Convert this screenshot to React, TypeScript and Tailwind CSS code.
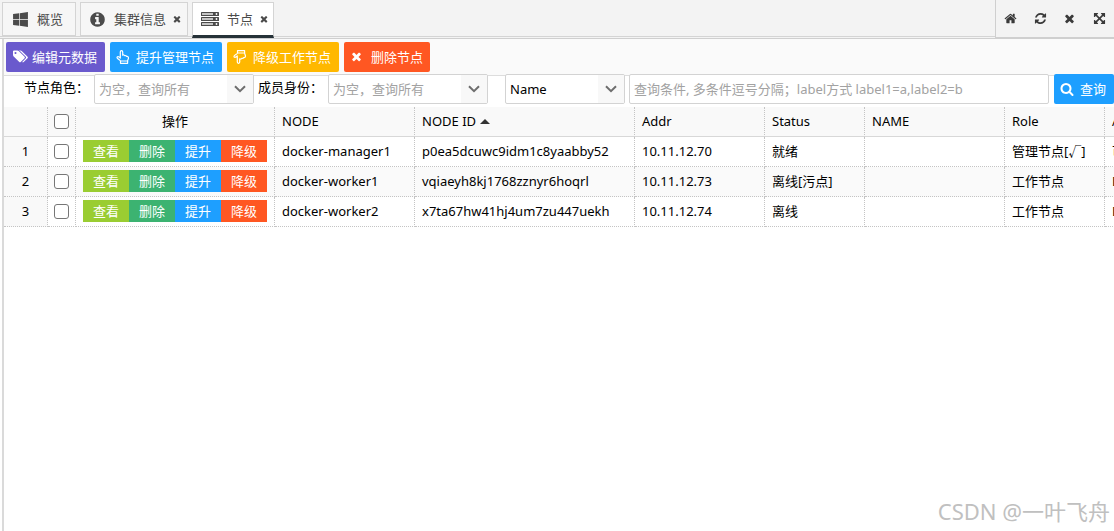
import { useState } from 'react';
import { FaWindows } from 'react-icons/fa';

const PATHS = {
  home: 'M1472 992v480q0 26-19 45t-45 19h-384v-384h-256v384h-384q-26 0-45-19t-19-45v-480q0-1 .5-3t.5-3l575-474 575 474q1 2 1 6zm223-69l-62 74q-8 9-21 11h-3q-13 0-21-7l-692-577-692 577q-12 8-24 7-13-2-21-11l-62-74q-8-10-7-23.5t11-21.5l719-599q32-26 76-26t76 26l244 204v-195q0-14 9-23t23-9h192q14 0 23 9t9 23v408l219 182q10 8 11 21.5t-7 23.5z',
  times: 'M1490 1322q0 40-28 68l-136 136q-28 28-68 28t-68-28l-294-294-294 294q-28 28-68 28t-68-28l-136-136q-28-28-28-68t28-68l294-294-294-294q-28-28-28-68t28-68l136-136q28-28 68-28t68 28l294 294 294-294q28-28 68-28t68 28l136 136q28 28 28 68t-28 68l-294 294 294 294q28 28 28 68z',
  refresh: 'M1639 1056q0 5-1 7-64 268-268 434.5t-478 166.5q-146 0-282.5-55t-243.5-157l-129 129q-19 19-45 19t-45-19-19-45v-448q0-26 19-45t45-19h448q26 0 45 19t19 45-19 45l-137 137q71 66 161 102t187 36q134 0 250-65t186-179q11-17 53-117 8-23 30-23h192q13 0 22.5 9.5t9.5 22.5zm25-800v448q0 26-19 45t-45 19h-448q-26 0-45-19t-19-45 19-45l138-138q-148-137-349-137-134 0-250 65t-186 179q-11 17-53 117-8 23-30 23h-199q-13 0-22.5-9.5t-9.5-22.5v-7q65-268 270-434.5t480-166.5q146 0 284 55.5t245 156.5l130-129q19-19 45-19t45 19 19 45z',
  expand: 'M1411 541l-355 355 355 355 144-144q29-31 70-14 39 17 39 59v448q0 26-19 45t-45 19h-448q-42 0-59-40-17-39 14-69l144-144-355-355-355 355 144 144q31 30 14 69-17 40-59 40h-448q-26 0-45-19t-19-45v-448q0-42 40-59 39-17 69 14l144 144 355-355-355-355-144 144q-19 19-45 19-12 0-24-5-40-17-40-59v-448q0-26 19-45t45-19h448q42 0 59 40 17 39-14 69l-144 144 355 355 355-355-144-144q-31-30-14-69 17-40 59-40h448q26 0 45 19t19 45v448q0 42-39 59-13 5-25 5-26 0-45-19z',
  search: 'M1216 832q0-185-131.5-316.5t-316.5-131.5-316.5 131.5-131.5 316.5 131.5 316.5 316.5 131.5 316.5-131.5 131.5-316.5zm512 832q0 52-38 90t-90 38q-54 0-90-38l-343-342q-179 124-399 124-143 0-273.5-55.5t-225-150-150-225-55.5-273.5 55.5-273.5 150-225 225-150 273.5-55.5 273.5 55.5 225 150 150 225 55.5 273.5q0 220-124 399l343 343q37 37 37 90z',
  info: 'M1152 1376v-160q0-14-9-23t-23-9h-96v-512q0-14-9-23t-23-9h-320q-14 0-23 9t-9 23v160q0 14 9 23t23 9h96v320h-96q-14 0-23 9t-9 23v160q0 14 9 23t23 9h448q14 0 23-9t9-23zm-128-896v-160q0-14-9-23t-23-9h-192q-14 0-23 9t-9 23v160q0 14 9 23t23 9h192q14 0 23-9t9-23zm640 416q0 209-103 385.5t-279.5 279.5-385.5 103-385.5-103-279.5-279.5-103-385.5 103-385.5 279.5-279.5 385.5-103 385.5 103 279.5 279.5 103 385.5z',
  tags: 'M576 448q0-53-37.5-90.5t-90.5-37.5-90.5 37.5-37.5 90.5 37.5 90.5 90.5 37.5 90.5-37.5 37.5-90.5zm1067 576q0 53-37 90l-491 492q-39 37-91 37-53 0-90-37l-715-716q-38-37-64.5-101t-26.5-117v-416q0-52 38-90t90-38h416q53 0 117 26.5t102 64.5l715 714q37 39 37 91zm384 0q0 53-37 90l-491 492q-39 37-91 37-36 0-59-14t-53-45l470-470q37-37 37-90 0-52-37-91l-715-714q-38-38-102-64.5t-117-26.5h224q53 0 117 26.5t102 64.5l715 714q37 39 37 91z',
};

function Icon({ name, className }: { name: keyof typeof PATHS; className: string }) {
  return (
    <svg viewBox={name === 'tags' ? '0 0 2048 1792' : '0 0 1792 1792'} fill="currentColor" className={className} aria-hidden="true">
      <path d={PATHS[name]} />
    </svg>
  );
}

function HandIcon({ down }: { down?: boolean }) {
  return (
    <svg viewBox="0 0 14 14" className="size-[14px]" fill="none" stroke="currentColor" strokeWidth="1.2" strokeLinejoin="round" aria-hidden="true">
      <g transform={down ? 'matrix(1 0 0 -1 0 14)' : undefined}>
        <path d="M4.3 8V1.9a1.2 1.2 0 0 1 2.4 0v3.3c.8-.5 1.8-.2 2.1.5.8-.3 1.7 0 1.9.8 1-.2 1.8.4 1.8 1.4 0 1.2-.9 2-.9 3.1H4.5C4.3 9.8 1 8.900 1 7.500c0-1.100 1.700-1.300 3.300.5z" />
        <path d="M4.500 11v2.300h7.100V11" />
      </g>
    </svg>
  );
}

function ServerIcon() {
  return (
    <svg viewBox="0 0 18 14" className="h-[14px] w-[18px]" aria-hidden="true">
      {[0, 5, 10].map((y) => (
        <g key={y}>
          <rect x="0" y={y} width="18" height="4" rx="0.6" fill="#4b4b4b" />
          <rect x="1" y={y + 1} width="11" height="2" fill="#c4c4c4" />
          <circle cx="15.5" cy={y + 2} r="0.9" fill="#fff" />
        </g>
      ))}
    </svg>
  );
}

function Chevron() {
  return (
    <span className="pointer-events-none absolute inset-y-0 right-0 flex w-[26px] items-center justify-center bg-[#f8f8f8]">
      <svg viewBox="0 0 12 8" className="h-2 w-3" fill="none" stroke="#6e6e6e" strokeWidth="2" aria-hidden="true">
        <path d="M1 1.2l5 5 5-5" />
      </svg>
    </span>
  );
}

function Combo({ id, width, options, muted }: { id: string; width: string; options: string[]; muted?: boolean }) {
  return (
    <div className={`relative h-[30px] shrink-0 overflow-hidden rounded-xs border border-[#d3d3d3] bg-white ${width}`}>
      <select id={id} aria-label={id} className={`block h-full w-full appearance-none bg-transparent px-1 outline-none ${muted ? 'text-[#a2a2a2]' : 'text-black'}`}>
        {options.map((o) => (
          <option key={o}>{o}</option>
        ))}
      </select>
      <Chevron />
    </div>
  );
}

const columns = [
  { title: 'NODE', width: 'w-[140px]' },
  { title: 'NODE ID', width: 'w-[220px]', sorted: true },
  { title: 'Addr', width: 'w-[130px]' },
  { title: 'Status', width: 'w-[100px]' },
  { title: 'NAME', width: 'w-[140px]' },
  { title: 'Role', width: 'w-[100px]' },
  { title: 'Availability', width: 'w-[100px]' },
];

const nodes = [
  ['docker-manager1', 'p0ea5dcuwc9idm1c8yaabby52', '10.11.12.70', '就绪', '', '管理节点[√]', '可用'],
  ['docker-worker1', 'vqiaeyh8kj1768zznyr6hoqrl', '10.11.12.73', '离线[污点]', '', '工作节点', 'Drain'],
  ['docker-worker2', 'x7ta67hw41hj4um7zu447uekh', '10.11.12.74', '离线', '', '工作节点', 'Drain'],
];

const actions = [
  { label: '查看', color: 'bg-[#9acd32]' },
  { label: '删除', color: 'bg-[#3cb371]' },
  { label: '提升', color: 'bg-[#1e9fff]' },
  { label: '降级', color: 'bg-[#ff5722]' },
];

const cell = 'border-r border-dotted border-r-[#c4c4c4]';
const toolButton = 'flex h-[30px] items-center rounded-xs text-white';

function App() {
  const [query, setQuery] = useState('');
  const [checked, setChecked] = useState<number[]>([]);

  const toggle = (i: number) => {
    setChecked(checked.includes(i) ? checked.filter((c) => c !== i) : [...checked, i]);
  };

  return (
    <div className="relative flex min-h-screen flex-col overflow-hidden bg-white text-[13px] leading-5 text-black [font-family:'Noto_Sans','Noto_Sans_CJK_SC',sans-serif]">
      <header className="flex h-[39px] shrink-0 justify-between border-b border-[#cfcfcf] bg-[#f3f3f3]">
        <nav className="flex h-[37px] grow gap-1 border-b border-[#d4d4d4] pt-0.5 pl-0.5 text-[#4b4b4b]">
          <button className="flex w-[74px] items-center gap-2 border border-[#d4d4d4] bg-[#f6f6f6] pl-[9px]">
            <FaWindows className="size-[17px]" />
            概览
          </button>
          <div className="flex w-[108px] items-center border border-[#d4d4d4] bg-[#f6f6f6] pl-2">
            <button className="flex items-center gap-2">
              <Icon name="info" className="size-[17px]" />
              集群信息
            </button>
            <button aria-label="关闭集群信息" className="ml-1.5">
              <Icon name="times" className="size-[10px]" />
            </button>
          </div>
          <div className="flex h-9 w-[82px] items-center border border-b-[3px] border-[#d4d4d4] border-b-[#263238] bg-white pl-2">
            <button className="flex items-center gap-2">
              <ServerIcon />
              节点
            </button>
            <button aria-label="关闭节点" className="ml-1.5">
              <Icon name="times" className="size-[10px]" />
            </button>
          </div>
        </nav>
        <div className="flex w-[119px] shrink-0 items-center justify-between border-b border-l border-[#cfcfcf] pr-2 pl-2 text-[#3a3a3a]">
          <button aria-label="首页"><Icon name="home" className="size-[13px]" /></button>
          <button aria-label="刷新"><Icon name="refresh" className="size-[13px]" /></button>
          <button aria-label="关闭"><Icon name="times" className="size-[13px]" /></button>
          <button aria-label="全屏"><Icon name="expand" className="size-[13px]" /></button>
        </div>
      </header>

      <main className="ml-0.5 grow border-l-2 border-[#dadada]">
        <div className="flex h-[35px] items-center gap-[5px] bg-[#fafafa] pl-0.5">
          <button className={`${toolButton} w-[99px] gap-1 bg-[#6a5acd] pl-1.5`}>
            <Icon name="tags" className="h-[15px] w-4" />
            编辑元数据
          </button>
          <button className={`${toolButton} w-[112px] gap-1.5 bg-[#1e9fff] pl-1.5`}>
            <HandIcon />
            提升管理节点
          </button>
          <button className={`${toolButton} w-[112px] gap-1.5 bg-[#ffb800] pl-1.5`}>
            <HandIcon down />
            降级工作节点
          </button>
          <button className={`${toolButton} w-[86px] gap-2 bg-[#ff5722] pl-1.5`}>
            <Icon name="times" className="size-[13px]" />
            删除节点
          </button>
        </div>

        <div className="flex h-[33px] bg-[linear-gradient(#fafafa_1px,#dddddd_1px,#dddddd_2px,#ffffff_2px)]">
          <label htmlFor="节点角色" className="w-[90px] pt-[3px] pl-5">节点角色：</label>
          <Combo id="节点角色" width="w-40" options={['为空，查询所有', '管理节点', '工作节点']} muted />
          <label htmlFor="成员身份" className="w-[74px] pt-[3px] pl-1">成员身份：</label>
          <Combo id="成员身份" width="w-40" options={['为空，查询所有', '就绪', '离线']} muted />
          <div className="ml-[17px] flex grow">
            <Combo id="查询字段" width="w-[120px]" options={['Name', 'ID', 'Label']} />
            <input
              type="text"
              aria-label="查询条件"
              placeholder="查询条件, 多条件逗号分隔；label方式 label1=a,label2=b"
              className="mr-[5px] ml-1 h-[30px] min-w-0 grow rounded-xs border border-[#d3d3d3] bg-white px-1 outline-none placeholder:text-[#a2a2a2]"
              value={query}
              onChange={(e) => setQuery(e.target.value)}
            />
            <button className={`${toolButton} w-[60px] shrink-0 gap-1.5 bg-[#1e9fff] pl-1.5`}>
              <Icon name="search" className="size-[14px]" />
              查询
            </button>
          </div>
        </div>

        <div className="overflow-hidden">
          <table className="w-[1201px] table-fixed border-separate border-spacing-0">
            <thead>
              <tr className="h-[30px] bg-[#f9f9f9] text-left *:border-b *:border-b-[#d8d8d8] *:font-normal *:[border-bottom-style:solid]">
                <th className={`${cell} w-11`}></th>
                <th className={`${cell} w-7`}>
                  <input
                    type="checkbox"
                    aria-label="全选"
                    className="mx-auto block size-[15px] appearance-none rounded-[3px] border border-[#767676] bg-white checked:bg-[#1e9fff]"
                    checked={checked.length === nodes.length}
                    onChange={(e) => setChecked(e.target.checked ? nodes.map((_, i) => i) : [])}
                  />
                </th>
                <th className={`${cell} w-[199px] pb-0.5 text-center`}>操作</th>
                {columns.map((c) => (
                  <th key={c.title} className={`${cell} ${c.width} pb-0.5 pl-[7px]`}>
                    {c.title}
                    {c.sorted && <span className="mb-0.5 ml-1 inline-block border-x-[5px] border-b-[5px] border-x-transparent border-b-[#333] align-middle"></span>}
                  </th>
                ))}
              </tr>
            </thead>
            <tbody>
              {nodes.map((node, i) => (
                <tr key={node[0]} className="h-[30px] even:bg-[#fafafa] *:border-b *:border-dotted *:border-b-[#c4c4c4]">
                  <td className={`${cell} bg-[#f9f9f9] pb-0.5 text-center`}>{i + 1}</td>
                  <td className={cell}>
                    <input
                      type="checkbox"
                      aria-label={node[0]}
                      className="mx-auto block size-[15px] appearance-none rounded-[3px] border border-[#767676] bg-white checked:bg-[#1e9fff]"
                      checked={checked.includes(i)}
                      onChange={() => toggle(i)}
                    />
                  </td>
                  <td className={`${cell} pb-0.5`}>
                    <div className="flex justify-center">
                      {actions.map((a) => (
                        <button key={a.label} className={`h-[22px] w-[46px] text-white ${a.color}`}>{a.label}</button>
                      ))}
                    </div>
                  </td>
                  {node.map((value, j) => (
                    <td key={j} className={`${cell} pb-0.5 pl-[7px] whitespace-nowrap`}>{value}</td>
                  ))}
                </tr>
              ))}
            </tbody>
          </table>
        </div>
      </main>

      <p className="pointer-events-none absolute right-1 bottom-1 text-[22px] leading-8 text-[#c0c0c0]">CSDN @一叶飞舟</p>
    </div>
  );
}

export default App;
